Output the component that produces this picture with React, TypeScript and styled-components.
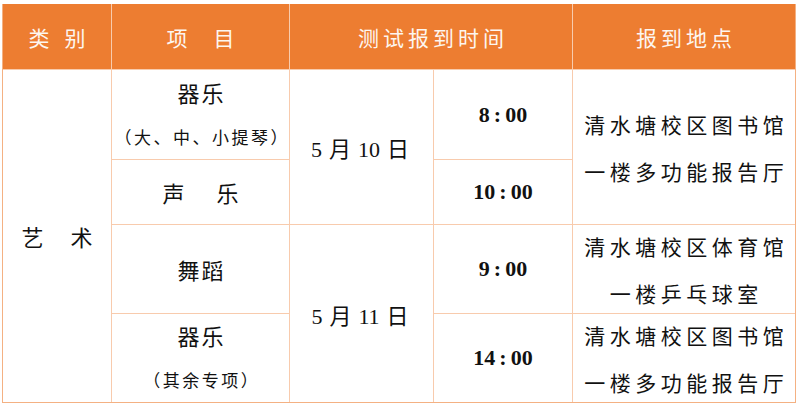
import React from "react";
import styled, { createGlobalStyle } from "styled-components";

const Global = createGlobalStyle`
  html, body { margin: 0; padding: 0; background: #ffffff; }
  body { font-family: "Noto Sans CJK SC", "Noto Sans", sans-serif; }
`;

const Page = styled.div`
  padding: 4px 0 0 2px;
  width: 800px;
  height: 408px;
  box-sizing: border-box;
  overflow: hidden;
`;

const Frame = styled.div`
  width: 794px;
  box-sizing: border-box;
  border-left: 1px solid #f4b183;
  border-right: 1px solid #f4b183;
  border-bottom: 1px solid #f4b183;
`;

const Grid = styled.div`
  display: grid;
  grid-template-columns: 108px 177px 143px 138px 222px;
  grid-template-rows: 65px 89px 64px 88px 88px;
  gap: 1px;
  background: #f8cbad;
`;

const Cell = styled.div<{ $col: string; $row: string; $head?: boolean }>`
  grid-column: ${(p) => p.$col};
  grid-row: ${(p) => p.$row};
  background: ${(p) => (p.$head ? "#ed7d31" : "#ffffff")};
  color: ${(p) => (p.$head ? "#fdf6f0" : "#111111")};
  display: flex;
  flex-direction: column;
  align-items: center;
  justify-content: center;
  font-family: "Noto Sans CJK SC", sans-serif;
`;

const HeadText = styled.div<{ $gap: number }>`
  display: flex;
  gap: ${(p) => p.$gap}px;
  font-size: 21px;
  line-height: 1;
  font-weight: 400;
  letter-spacing: ${(p) => (p.$gap === 0 ? 4 : 0)}px;
  padding-left: ${(p) => (p.$gap === 0 ? 4 : 0)}px;
  margin-top: 1px;
`;

const Spaced = styled.div<{ $gap: number }>`
  display: flex;
  gap: ${(p) => p.$gap}px;
  font-size: 22px;
  line-height: 44px;
`;

const Main = styled.div`
  font-size: 22px;
  line-height: 44px;
  letter-spacing: 2px;
  padding-left: 2px;
`;

const Sub = styled.div`
  font-size: 17px;
  line-height: 46px;
  letter-spacing: 2.5px;
  padding-left: 2.5px;
`;

const DateText = styled.div`
  font-family: "Liberation Serif", "Noto Sans CJK SC", serif;
  font-size: 22px;
  display: flex;
  align-items: baseline;
  gap: 7px;
  margin-right: 3px;
`;

const Time = styled.div`
  font-family: "Liberation Serif", serif;
  font-weight: 700;
  font-size: 22px;
  display: flex;
  align-items: center;
`;

const Colon = styled.span`
  margin: 0 4px;
`;

const Place = styled.div`
  font-size: 21px;
  line-height: 45px;
  letter-spacing: 4.5px;
  padding-left: 4.5px;
  text-align: center;
  margin-top: 2px;
`;

const Chars = ({ text, gap, head }: { text: string; gap: number; head?: boolean }) => {
  const C = head ? HeadText : Spaced;
  return (
    <C $gap={gap}>
      {text.split("").map((c, i) => (
        <span key={i}>{c}</span>
      ))}
    </C>
  );
};

const TimeVal = ({ h }: { h: string }) => (
  <Time>
    {h}
    <Colon>:</Colon>00
  </Time>
);

const DateVal = ({ day }: { day: string }) => (
  <DateText>
    <span>5</span>
    <span>月</span>
    <span>{day}</span>
    <span>日</span>
  </DateText>
);

export default function App() {
  return (
    <Page>
      <Global />
      <Frame>
        <Grid>
          <Cell $col="1" $row="1" $head>
            <Chars text="类别" gap={15} head />
          </Cell>
          <Cell $col="2" $row="1" $head>
            <Chars text="项目" gap={26} head />
          </Cell>
          <Cell $col="3 / span 2" $row="1" $head>
            <HeadText $gap={0}>测试报到时间</HeadText>
          </Cell>
          <Cell $col="5" $row="1" $head>
            <HeadText $gap={0}>报到地点</HeadText>
          </Cell>

          <Cell $col="1" $row="2 / span 4">
            <Chars text="艺术" gap={27} />
          </Cell>

          <Cell $col="2" $row="2">
            <Main>器乐</Main>
            <Sub>（大、中、小提琴）</Sub>
          </Cell>
          <Cell $col="2" $row="3">
            <Chars text="声乐" gap={32} />
          </Cell>
          <Cell $col="2" $row="4">
            <Main>舞蹈</Main>
          </Cell>
          <Cell $col="2" $row="5">
            <Main>器乐</Main>
            <Sub>（其余专项）</Sub>
          </Cell>

          <Cell $col="3" $row="2 / span 2">
            <DateVal day="10" />
          </Cell>
          <Cell $col="3" $row="4 / span 2">
            <DateVal day="11" />
          </Cell>

          <Cell $col="4" $row="2">
            <TimeVal h="8" />
          </Cell>
          <Cell $col="4" $row="3">
            <TimeVal h="10" />
          </Cell>
          <Cell $col="4" $row="4">
            <TimeVal h="9" />
          </Cell>
          <Cell $col="4" $row="5">
            <TimeVal h="14" />
          </Cell>

          <Cell $col="5" $row="2 / span 2">
            <Place>清水塘校区图书馆</Place>
            <Place>一楼多功能报告厅</Place>
          </Cell>
          <Cell $col="5" $row="4">
            <Place>清水塘校区体育馆</Place>
            <Place>一楼乒乓球室</Place>
          </Cell>
          <Cell $col="5" $row="5">
            <Place>清水塘校区图书馆</Place>
            <Place>一楼多功能报告厅</Place>
          </Cell>
        </Grid>
      </Frame>
    </Page>
  );
}
